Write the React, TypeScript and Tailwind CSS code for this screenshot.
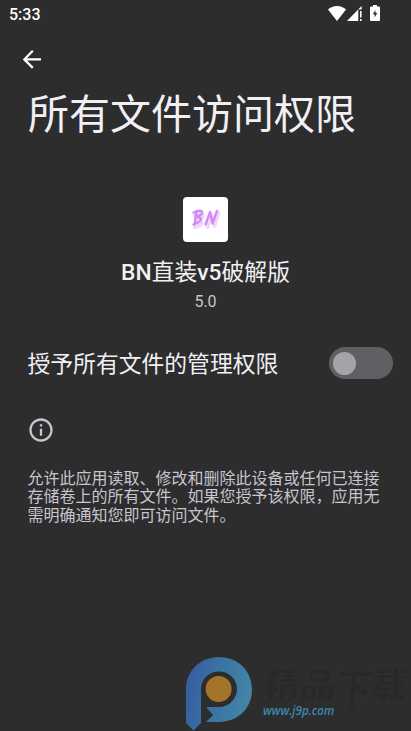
import { MdInfoOutline } from "react-icons/md";

const description = [
  "允许此应用读取、修改和删除此设备或任何已连接",
  "存储卷上的所有文件。如果您授予该权限，应用无",
  "需明确通知您即可访问文件。",
];

function StatusBar() {
  return (
    <div className="flex h-7 items-center justify-between pl-[9px] pr-[31px]">
      <span className="pt-[1px] text-base leading-7 font-medium text-white">5:33</span>
      <div className="flex h-full items-start pt-[6px] text-white">
        <svg width="18" height="15" viewBox="0 0 18 15" fill="currentColor">
          <path d="M0 3.6C2.4 1.2 5.4 0 9 0s6.6 1.2 9 3.6L9 15z" />
        </svg>
        <svg className="ml-[1px]" width="16" height="15" viewBox="0 0 16 15" fill="currentColor">
          <path d="M0 15L14.6 0v3.5h-3.3V15z" />
          <path d="M13 5h1.6v6.5H13zM13 13h1.6v2H13z" />
        </svg>
        <svg className="ml-[7px] -mt-[1px]" width="10" height="16" viewBox="0 0 10 16">
          <path fill="currentColor" d="M3 0h4v1.5h2a1 1 0 0 1 1 1V15a1 1 0 0 1-1 1H1a1 1 0 0 1-1-1V2.500a1 1 0 0 1 1-1h2z" />
          <path fill="#2d2d2d" d="M5.500 5L2.800 9.300h1.800v3.200l2.700-4.500H5.500z" />
        </svg>
      </div>
    </div>
  );
}

function AppIcon() {
  return (
    <div className="flex h-[45px] w-[45px] items-center justify-center rounded-[4px] bg-white">
      <svg width="45" height="45" viewBox="0 0 45 45" fill="none" strokeLinecap="round" strokeLinejoin="round">
        <g stroke="#f2d5fc" strokeWidth="3.600" transform="translate(1.5 2.2)">
          <path d="M13 15l-2 13M10 16c6-3 10-1 8 2-1 2-3 3-5 3 6 0 5 4 1 6l-4 1" />
          <path d="M23 28l4-13 3 12 4-13" />
        </g>
        <g stroke="#d08cf5" strokeWidth="2.400">
          <path d="M13.500 14.500l-2 13M10.500 15.500c6-3 10-2 8.500 1-1 1.500-3 3-6 3.500 6-.5 6 3.500 2 5.500l-4.500 2" />
          <path d="M22.500 27.500l4.500-12.500 2.500 11.500L34 14" />
        </g>
      </svg>
    </div>
  );
}

function Toggle() {
  return (
    <button
      type="button"
      role="switch"
      aria-checked={false}
      className="flex h-8 w-16 items-center rounded-full bg-[#5f6064] pl-1"
    >
      <span className="h-[23px] w-[23px] rounded-full bg-[#a5a3a8]" />
    </button>
  );
}

function Watermark() {
  return (
    <div className="absolute bottom-0 left-[186px] flex h-[74px] w-[225px]">
      <svg className="shrink-0" width="68" height="74" viewBox="0 0 68 74">
        <defs>
          <linearGradient id="mark" x1="0" y1="0.3" x2="1" y2="0.5">
            <stop offset="0" stopColor="#365da0" />
            <stop offset="0.45" stopColor="#3a73a3" />
            <stop offset="1" stopColor="#4386a6" />
          </linearGradient>
        </defs>
        <path
          fill="url(#mark)"
          d="M0 32C0 14 14 0 33 0s33 14 33 32.500S52 65 33 65H20l7-7-7-8h13c10 0 18-8 18-18S43 14.500 33 14.500 15 22 15 32v34l-7.500 7.500L0 66z"
        />
        <circle cx="32.600" cy="32" r="13" fill="#a4742b" />
      </svg>
      <div className="ml-[9px] shrink-0">
        <div className="flex h-[45px] -skew-x-6 pt-[8px] pl-[2px] text-[36px] leading-[42px] font-black whitespace-nowrap text-[#292929] [-webkit-text-stroke:0.5px_#333333]">
          <span>精品</span>
          <span className="origin-top scale-y-125">下</span>
          <span className="-ml-[1px]">载</span>
        </div>
        <span className="block w-[72px] origin-left scale-x-[0.93] font-['Open_Sans',sans-serif] text-[12.5px] leading-[18px] font-semibold text-[#3b89ae] italic">
          www.j9p.com
        </span>
      </div>
    </div>
  );
}

export default function App() {
  return (
    <div className="relative h-[731px] w-[411px] overflow-hidden bg-[#2d2d2d] font-[Roboto,'Noto_Sans_CJK_SC',sans-serif] text-[#f1f0f4]">
      <StatusBar />
      <header>
        <button type="button" aria-label="返回" className="ml-5 flex h-[62px] items-center text-white">
          <svg width="24" height="24" viewBox="0 0 24 24" fill="none" stroke="currentColor" strokeWidth="2.2">
            <path d="M21 12.400H5M12.800 3.800L4.300 12.400l8.500 8.500" />
          </svg>
        </button>
        <h1 className="-mt-[5px] pl-[28px] text-[41px] leading-[60px] whitespace-nowrap">所有文件访问权限</h1>
      </header>

      <section className="flex flex-col items-center pt-[52px]">
        <AppIcon />
        <h2 className="mt-[14px] text-[22.8px] leading-[34px]">
          <span className="font-medium">BN</span>直装<span className="font-medium">v5</span>破解版
        </h2>
        <p className="text-base leading-6 text-[#c5c5cb]">5.0</p>
      </section>

      <section className="flex h-[98px] items-center justify-between pr-[18px] pl-[27.5px]">
        <span className="pt-[4px] text-[22.8px] leading-[34px]">授予所有文件的管理权限</span>
        <Toggle />
      </section>

      <section className="pl-[27px] text-[#c6c5d0]">
        <MdInfoOutline size={28} className="mt-[4px]" />
        <p className="mt-[26px] pl-[0.5px] text-base leading-[18.3px] whitespace-nowrap">
          {description.map((line) => (
            <span key={line} className="block">
              {line}
            </span>
          ))}
        </p>
      </section>

      <Watermark />
    </div>
  );
}
